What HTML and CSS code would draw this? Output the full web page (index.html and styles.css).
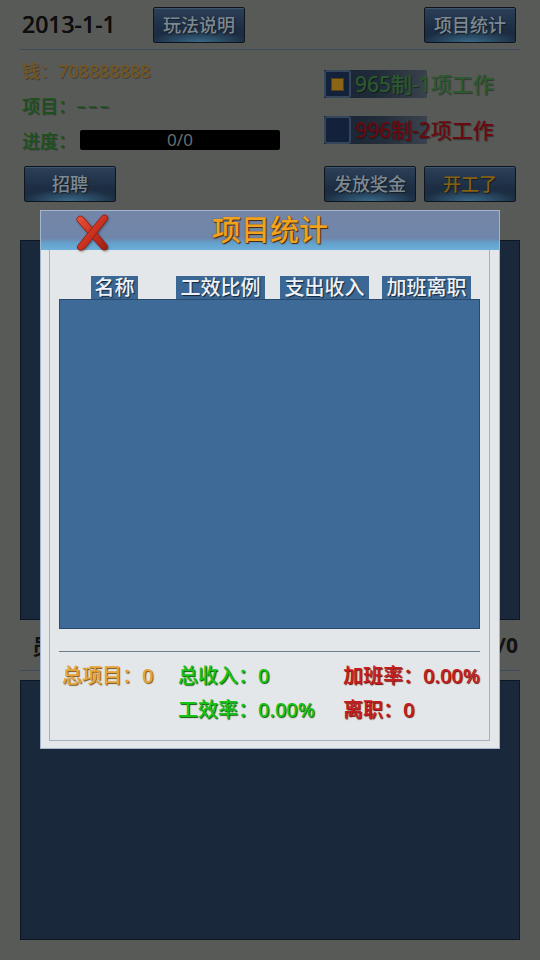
FILE: index.html
```html
<!DOCTYPE html>
<html lang="zh">
<head>
<meta charset="utf-8">
<title>项目统计</title>
<link rel="stylesheet" href="styles.css">
</head>
<body>
<div class="page">
  <div class="topbar">
    <div class="date">2013-1-1</div>
    <div class="btn">玩法说明</div>
    <div class="btn btn-right">项目统计</div>
  </div>

  <div class="info">
    <div class="info-left">
      <div class="line money">钱：708888888</div>
      <div class="line green">项目：<span class="dash">---</span></div>
      <div class="line green">进度：<div class="bar">0/0</div></div>
    </div>
    <div class="info-right">
      <div class="opt">
        <div class="cb"><div class="cb-mark"></div></div>
        <span class="opt-text opt-green">965制-1项工作</span>
      </div>
      <div class="opt">
        <div class="cb"></div>
        <span class="opt-text opt-red">996制-2项工作</span>
      </div>
    </div>
  </div>

  <div class="actions">
    <div class="btn btn-first">招聘</div>
    <div class="btn btn-push">发放奖金</div>
    <div class="btn btn-gold">开工了</div>
  </div>

  <div class="panel panel-top"></div>
  <div class="staff-row">
    <span class="staff-left">员工：0</span>
    <span class="staff-right">0/0</span>
  </div>
  <div class="panel panel-bottom"></div>

  <div class="modal">
    <div class="modal-head">
      <svg class="close" viewBox="0 0 40 42" width="40" height="42">
        <defs>
          <linearGradient id="xg" x1="0" y1="0" x2="1" y2="1">
            <stop offset="0" stop-color="#e8523a"/>
            <stop offset="0.5" stop-color="#cc3220"/>
            <stop offset="1" stop-color="#9a1e10"/>
          </linearGradient>
        </defs>
        <path d="M5 7 Q8 3 12 7 L35 34 Q37 39 32 39 Q30 39 28 36 L6 11 Q4 9 5 7 Z" fill="url(#xg)" stroke="#8a1a0e" stroke-width="0.8"/>
        <path d="M32 4 Q37 4 35 9 L13 37 Q9 41 6 38 Q4 36 7 33 L29 6 Q30 4 32 4 Z" fill="url(#xg)" stroke="#8a1a0e" stroke-width="0.8"/>
      </svg>
      <div class="modal-title">项目统计</div>
    </div>
    <div class="modal-body">
      <div class="frame">
        <div class="tabs">
          <div class="tab t1">名称</div>
          <div class="tab t2">工效比例</div>
          <div class="tab t3">支出收入</div>
          <div class="tab t4">加班离职</div>
        </div>
        <div class="table"></div>
        <div class="divider"></div>
        <div class="stats">
          <div class="s-orange">总项目：0</div>
          <div class="s-green">总收入：0</div>
          <div class="s-red">加班率：0.00%</div>
          <div></div>
          <div class="s-green">工效率：0.00%</div>
          <div class="s-red">离职：0</div>
        </div>
      </div>
    </div>
  </div>
</div>
</body>
</html>
```

FILE: styles.css
```css
html, body {
  margin: 0;
  padding: 0;
}
body {
  width: 540px;
  height: 960px;
  overflow: hidden;
  background: #585a58;
  font-family: "Noto Sans", "Noto Sans CJK SC", sans-serif;
  font-weight: 500;
}
.page {
  position: relative;
  height: 960px;
  padding: 0 20px;
  box-sizing: border-box;
}

/* top bar */
.topbar {
  display: flex;
  align-items: center;
  height: 49px;
  border-bottom: 1px solid #3e4b5c;
}
.date {
  width: 131px;
  padding-left: 2px;
  font-size: 23px;
  color: #0e0e0e;
  line-height: 1;
  text-shadow: 0 0 0.6px #0e0e0e;
}
.btn {
  width: 92px;
  height: 36px;
  box-sizing: border-box;
  border: 1px solid #0e151c;
  border-radius: 2px;
  background:
    radial-gradient(ellipse 55% 35% at 50% 100%, rgba(70, 130, 165, 0.7), rgba(70, 130, 165, 0) 100%),
    linear-gradient(#2c4058, #1d2e44 60%, #1b2c40);
  box-shadow: inset 0 1px 0 rgba(110, 140, 170, 0.3);
  color: #7c8892;
  font-size: 18px;
  line-height: 34px;
  text-align: center;
  text-shadow: 1px 1px 1px #141c24;
}
.btn-right {
  margin-left: auto;
  margin-right: 4px;
}

/* info */
.info {
  display: flex;
  height: 116px;
}
.info-left {
  width: 304px;
  padding-top: 2px;
  padding-left: 2px;
  box-sizing: border-box;
}
.line {
  display: flex;
  align-items: center;
  height: 35px;
  font-size: 18px;
  text-shadow: 1px 1px 0 rgba(0, 0, 0, 0.3);
}
.money { color: #765620; }
.green { color: #1b521b; }
.dash {
  display: inline-block;
  letter-spacing: 1px;
  transform: scaleX(1.7);
  transform-origin: left center;
}
.bar {
  width: 200px;
  height: 20px;
  margin-left: 4px;
  background: #000;
  border-radius: 2px;
  color: #6a6e70;
  font-size: 17px;
  font-weight: 400;
  line-height: 20px;
  text-align: center;
  text-shadow: none;
}
.info-right {
  padding-top: 20px;
  display: flex;
  flex-direction: column;
  gap: 18px;
}
.opt {
  display: flex;
  align-items: center;
  height: 28px;
  background: linear-gradient(to right, #152033, #222d3a 55%, #3a434c) no-repeat;
  background-size: 103px 100%;
}
.cb {
  width: 27px;
  height: 28px;
  box-sizing: border-box;
  border: 2px solid #34465a;
  border-radius: 3px;
  background: #13213a;
  display: flex;
  align-items: center;
  justify-content: center;
}
.cb-mark {
  width: 13px;
  height: 13px;
  background: #8c6418;
  border: 1px solid #5a3e0c;
  box-sizing: border-box;
}
.opt-text {
  margin-left: 4px;
  font-size: 21px;
  line-height: 28px;
  text-shadow: 1px 1px 1px rgba(0, 0, 0, 0.4);
}
.opt-green { color: #2a5a2d; }
.opt-red { color: #680a10; }

/* actions */
.actions {
  display: flex;
  gap: 8px;
}
.btn-first { margin-left: 4px; }
.btn-push { margin-left: auto; }
.btn-gold {
  margin-right: 4px;
  color: #86600f;
}

/* background panels */
.panel {
  box-sizing: border-box;
  background: #19283a;
  border: 1px solid #0f1822;
}
.panel-top {
  margin-top: 38px;
  height: 380px;
}
.staff-row {
  display: flex;
  justify-content: space-between;
  align-items: center;
  height: 50px;
  border-bottom: 1px solid #3e4b5c;
  padding: 0 2px 0 12px;
  font-size: 21px;
  color: #111;
  font-weight: bold;
}
.panel-bottom {
  margin-top: 9px;
  height: 260px;
}

/* modal */
.modal {
  position: absolute;
  left: 40px;
  top: 210px;
  width: 460px;
  height: 539px;
  box-sizing: border-box;
  border: 1px solid #a3b5cc;
  background: #e3e7e9;
  display: flex;
  flex-direction: column;
}
.modal-head {
  position: relative;
  height: 39px;
  flex: none;
  background: linear-gradient(#7486a8 0%, #6f86aa 70%, #64a0cc 82%, #6cb0da 100%);
  display: flex;
  align-items: center;
  justify-content: center;
}
.close {
  position: absolute;
  left: 31px;
  top: 0;
  filter: drop-shadow(1px 1px 1px rgba(40, 20, 20, 0.45));
}
.modal-title {
  font-size: 29px;
  line-height: 1;
  color: #f2a21e;
  text-shadow: 1px 1px 1px #3c2a0e, 0 0 1px #6a4a14;
  margin-top: -2px;
}
.modal-body {
  flex: 1;
  padding: 0 9px 7px 8px;
  display: flex;
}
.frame {
  flex: 1;
  border: 1px solid #a3b0c2;
  border-top: none;
  padding: 26px 9px 0 9px;
}
.tabs {
  display: flex;
  height: 23px;
}
.tab {
  height: 23px;
  background: #3b6794;
  color: #eef2f6;
  font-size: 20px;
  line-height: 23px;
  text-align: center;
  text-shadow: 1px 1px 1px #15253a;
}
.t1 { width: 47px; margin-left: 32px; }
.t2 { width: 89px; margin-left: 38px; }
.t3 { width: 89px; margin-left: 15px; }
.t4 { width: 89px; margin-left: 13px; }
.table {
  height: 330px;
  box-sizing: border-box;
  background: #3d6a96;
  border: 1px solid #294a6c;
}
.divider {
  margin-top: 22px;
  height: 1px;
  background: #6a7d95;
}
.stats {
  margin-top: 7px;
  padding-left: 3px;
  display: grid;
  grid-template-columns: 116px 165px auto;
  grid-auto-rows: 34px;
  align-items: center;
  font-size: 20px;
  line-height: 34px;
  white-space: nowrap;
}
.s-orange {
  color: #e6a43c;
  text-shadow: 1px 1px 1px #7a5418;
}
.s-green {
  color: #16c416;
  text-shadow: 1px 1px 1px #0a5a0a;
}
.s-red {
  color: #c61c1c;
  text-shadow: 1px 1px 1px #6a0a0a;
}
```
